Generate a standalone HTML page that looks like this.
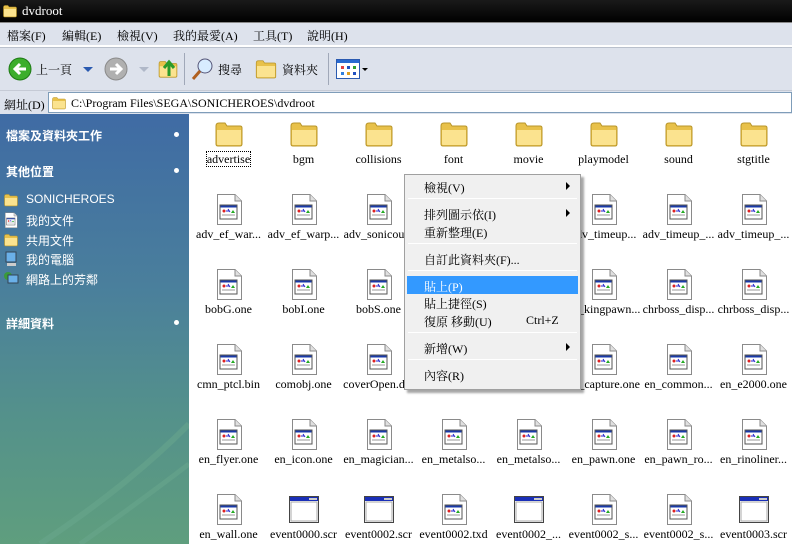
<!DOCTYPE html>
<html><head><meta charset="utf-8"><style>
*{margin:0;padding:0;box-sizing:border-box}
body{width:792px;height:544px;overflow:hidden;background:#fff;position:relative;font-family:"Liberation Serif","Noto Serif CJK SC",serif;font-size:12px;color:#000}
.abs{position:absolute}
#title{left:0;top:0;width:792px;height:22px;background:linear-gradient(#1a1a1a,#000);color:#fff;font-size:13px;line-height:22px;padding-left:22px}
#menubar{left:0;top:22px;width:792px;height:24px;background:#dde2ec;border-top:1px solid #888;border-bottom:1px solid #fff}
#menubar span{position:absolute;top:4px;font-size:12px}
#toolbar{left:0;top:47px;width:792px;height:43px;background:#dde2ec;border-top:1px solid #b9c0cc}
#addr{left:0;top:90px;width:792px;height:24px;background:#dde2ec;border-top:1px solid #c5cad5}
#side{left:0;top:114px;width:189px;height:430px;background:linear-gradient(#3f6ba4 0%,#4a7f9c 40%,#54918b 70%,#5f9e7e 100%);overflow:hidden}
#side .h{position:absolute;left:6px;color:#fff;font-family:"Liberation Sans","Noto Sans CJK SC",sans-serif;font-size:12px;font-weight:bold}
#side .dot{position:absolute;left:174px;width:5px;height:5px;border-radius:50%;background:#fff}
#side .i{position:absolute;left:26px;color:#fff;font-family:"Liberation Sans","Noto Sans CJK SC",sans-serif;font-size:12px}
.c{position:absolute;width:75px;text-align:center}
.c svg{display:block;margin:0 auto}
.c .l{position:absolute;left:-6px;width:87px;top:34px;white-space:nowrap;font-size:12px;line-height:14px}
#menu{left:404px;top:174px;width:177px;height:216px;background:#f0f0f0;border:1px solid #a0a0a0;box-shadow:3px 3px 2px rgba(0,0,0,.35);font-size:12px}
#menu .m{position:absolute;left:19px}
#menu .sep{position:absolute;left:3px;width:169px;height:1px;background:#a0a0a0;border-bottom:1px solid #fff}
#menu .ar{position:absolute;left:161px;width:0;height:0;border-left:4px solid #000;border-top:4px solid transparent;border-bottom:4px solid transparent}
</style></head><body>
<svg width="0" height="0" style="position:absolute"><defs>
<symbol id="fold" viewBox="0 0 32 32"><path d="M3 8 Q3 5 6 5 H12 L14 8 H27 Q29 8 29 10 V26 Q29 28 27 28 H5 Q3 28 3 26 Z" fill="#e8c14a" stroke="#b8952a"/><path d="M4 12 H28 V26 Q28 27 27 27 H5 Q4 27 4 26 Z" fill="#fbe38f"/></symbol>
<symbol id="doc" viewBox="0 0 32 32"><path d="M4.5 1.5 H22 L28.5 8 V31.5 H4.5 Z" fill="#fff" stroke="#8a8a8a"/><path d="M22 1.5 V8 H28.5" fill="#e0e0e0" stroke="#8a8a8a"/><rect x="7" y="12" width="17" height="14" fill="#fff" stroke="#555"/><rect x="7.5" y="12.5" width="16" height="2" fill="#1a3aa8"/><circle cx="11" cy="18" r="1.5" fill="#d22"/><path d="M13 18 h3 M15 16 l2 3" stroke="#22c" /><path d="M18 20 l2 -3 l2 3z" fill="#2a2"/><path d="M9 22 h13" stroke="#999"/></symbol>
<symbol id="win" viewBox="0 0 32 32"><rect x="1.5" y="3.5" width="29" height="26" fill="#fff" stroke="#444"/><rect x="2" y="4" width="28" height="4" fill="#1a2fb8"/><rect x="3" y="9" width="26" height="19" fill="#fff" stroke="#aaa"/><rect x="21" y="5" width="8" height="2" fill="#ccc"/></symbol>
</defs></svg>

<div id="title" class="abs"><svg class="abs" style="left:2px;top:3px" width="16" height="16"><use href="#fold"/></svg>dvdroot</div>
<div id="menubar" class="abs"><span style="left:7px">檔案(F)</span><span style="left:62px">編輯(E)</span><span style="left:117px">檢視(V)</span><span style="left:173px">我的最愛(A)</span><span style="left:253px">工具(T)</span><span style="left:307px">說明(H)</span></div>
<div id="toolbar" class="abs">
<svg class="abs" style="left:8px;top:9px" width="24" height="24"><circle cx="12" cy="12" r="11" fill="#3cae2c" stroke="#1d7a14"/><path d="M18 12 H8 M12 7 L7 12 L12 17" stroke="#fff" stroke-width="3" fill="none"/></svg>
<span class="abs" style="left:36px;top:13px">上一頁</span>
<div class="abs" style="left:83px;top:19px;border-top:5px solid #2a5ab0;border-left:5px solid transparent;border-right:5px solid transparent"></div>
<svg class="abs" style="left:104px;top:9px" width="24" height="24"><circle cx="12" cy="12" r="11" fill="#b0b0b0" stroke="#8a8a8a"/><path d="M6 12 H16 M12 7 L17 12 L12 17" stroke="#fff" stroke-width="3" fill="none"/></svg>
<div class="abs" style="left:139px;top:19px;border-top:5px solid #b0b8c8;border-left:5px solid transparent;border-right:5px solid transparent"></div>
<svg class="abs" style="left:157px;top:8px" width="22" height="26"><use href="#fold"/><path d="M12 20 V8 M7 12 L12 6 L17 12" stroke="#2a9a2a" stroke-width="3" fill="none"/></svg>
<div class="abs" style="left:184px;top:5px;width:1px;height:32px;background:#a0a8b8"></div>
<svg class="abs" style="left:190px;top:8px" width="26" height="26"><circle cx="15" cy="10" r="7" fill="#d8ecff" stroke="#557"/><path d="M10 15 L3 23" stroke="#b06020" stroke-width="3"/></svg>
<span class="abs" style="left:218px;top:13px">搜尋</span>
<svg class="abs" style="left:254px;top:9px" width="24" height="24"><use href="#fold"/></svg>
<span class="abs" style="left:282px;top:13px">資料夾</span>
<div class="abs" style="left:328px;top:5px;width:1px;height:32px;background:#a0a8b8"></div>
<svg class="abs" style="left:336px;top:11px" width="24" height="20"><rect x="0.5" y="0.5" width="23" height="19" fill="#fff" stroke="#2a5ab0"/><rect x="1" y="1" width="22" height="3" fill="#2a6ad0"/><rect x="5" y="7" width="3" height="3" fill="#e04040"/><rect x="11" y="7" width="3" height="3" fill="#2050c0"/><rect x="17" y="7" width="3" height="3" fill="#30a030"/><rect x="5" y="13" width="3" height="3" fill="#3080e0"/><rect x="11" y="13" width="3" height="3" fill="#e0a020"/><rect x="17" y="13" width="3" height="3" fill="#2050c0"/></svg>
<div class="abs" style="left:362px;top:20px;border-top:3px solid #000;border-left:3px solid transparent;border-right:3px solid transparent"></div>
</div>
<div id="addr" class="abs"><span class="abs" style="left:4px;top:5px">網址(D)</span>
<div class="abs" style="left:48px;top:1px;width:744px;height:21px;background:#fff;border:1px solid #7f9db9"></div>
<svg class="abs" style="left:51px;top:4px" width="16" height="16"><use href="#fold"/></svg>
<span class="abs" style="left:71px;top:5px">C:\Program Files\SEGA\SONICHEROES\dvdroot</span></div>

<div id="side" class="abs">
<svg class="abs" style="left:0;top:200px" width="189" height="230"><path d="M40 230 Q130 170 189 110" stroke="#6aa88e" stroke-width="6" fill="none" opacity=".5"/><path d="M80 230 Q150 180 189 150" stroke="#6aa88e" stroke-width="5" fill="none" opacity=".5"/></svg>
<div class="h" style="top:13px">檔案及資料夾工作</div><div class="dot" style="top:18px"></div>
<div class="h" style="top:49px">其他位置</div><div class="dot" style="top:54px"></div>
<svg class="abs" style="left:3px;top:78px" width="16" height="16"><use href="#fold"/></svg><div class="i" style="top:78px">SONICHEROES</div>
<svg class="abs" style="left:3px;top:98px" width="16" height="16"><use href="#doc"/></svg><div class="i" style="top:98px">我的文件</div>
<svg class="abs" style="left:3px;top:118px" width="16" height="16"><use href="#fold"/></svg><div class="i" style="top:118px">共用文件</div>
<svg class="abs" style="left:3px;top:137px" width="16" height="16"><rect x="3" y="1" width="10" height="10" fill="#6ab0e8" stroke="#345"/><rect x="4" y="12" width="9" height="3" fill="#ccc"/></svg><div class="i" style="top:137px">我的電腦</div>
<svg class="abs" style="left:3px;top:157px" width="16" height="16"><circle cx="5" cy="5" r="4" fill="#3a9a3a"/><rect x="5" y="4" width="10" height="8" fill="#6ab0e8" stroke="#345"/></svg><div class="i" style="top:157px">網路上的芳鄰</div>
<div class="h" style="top:201px">詳細資料</div><div class="dot" style="top:206px"></div>
</div>

<!-- row 1 -->
<div class="c" style="left:191px;top:118px"><svg width="32" height="32"><use href="#fold"/></svg><div class="l"><span style="outline:1px dotted #000">advertise</span></div></div>
<div class="c" style="left:266px;top:118px"><svg width="32" height="32"><use href="#fold"/></svg><div class="l">bgm</div></div>
<div class="c" style="left:341px;top:118px"><svg width="32" height="32"><use href="#fold"/></svg><div class="l">collisions</div></div>
<div class="c" style="left:416px;top:118px"><svg width="32" height="32"><use href="#fold"/></svg><div class="l">font</div></div>
<div class="c" style="left:491px;top:118px"><svg width="32" height="32"><use href="#fold"/></svg><div class="l">movie</div></div>
<div class="c" style="left:566px;top:118px"><svg width="32" height="32"><use href="#fold"/></svg><div class="l">playmodel</div></div>
<div class="c" style="left:641px;top:118px"><svg width="32" height="32"><use href="#fold"/></svg><div class="l">sound</div></div>
<div class="c" style="left:716px;top:118px"><svg width="32" height="32"><use href="#fold"/></svg><div class="l">stgtitle</div></div>
<!-- row 2 -->
<div class="c" style="left:191px;top:193px"><svg width="32" height="32"><use href="#doc"/></svg><div class="l">adv_ef_war...</div></div>
<div class="c" style="left:266px;top:193px"><svg width="32" height="32"><use href="#doc"/></svg><div class="l">adv_ef_warp...</div></div>
<div class="c" style="left:341px;top:193px"><svg width="32" height="32"><use href="#doc"/></svg><div class="l">adv_sonicou...</div></div>
<div class="c" style="left:566px;top:193px"><svg width="32" height="32"><use href="#doc"/></svg><div class="l">adv_timeup...</div></div>
<div class="c" style="left:641px;top:193px"><svg width="32" height="32"><use href="#doc"/></svg><div class="l">adv_timeup_...</div></div>
<div class="c" style="left:716px;top:193px"><svg width="32" height="32"><use href="#doc"/></svg><div class="l">adv_timeup_...</div></div>
<!-- row 3 -->
<div class="c" style="left:191px;top:268px"><svg width="32" height="32"><use href="#doc"/></svg><div class="l">bobG.one</div></div>
<div class="c" style="left:266px;top:268px"><svg width="32" height="32"><use href="#doc"/></svg><div class="l">bobI.one</div></div>
<div class="c" style="left:341px;top:268px"><svg width="32" height="32"><use href="#doc"/></svg><div class="l">bobS.one</div></div>
<div class="c" style="left:566px;top:268px"><svg width="32" height="32"><use href="#doc"/></svg><div class="l">en_kingpawn...</div></div>
<div class="c" style="left:641px;top:268px"><svg width="32" height="32"><use href="#doc"/></svg><div class="l">chrboss_disp...</div></div>
<div class="c" style="left:716px;top:268px"><svg width="32" height="32"><use href="#doc"/></svg><div class="l">chrboss_disp...</div></div>
<!-- row 4 -->
<div class="c" style="left:191px;top:343px"><svg width="32" height="32"><use href="#doc"/></svg><div class="l">cmn_ptcl.bin</div></div>
<div class="c" style="left:266px;top:343px"><svg width="32" height="32"><use href="#doc"/></svg><div class="l">comobj.one</div></div>
<div class="c" style="left:341px;top:343px"><svg width="32" height="32"><use href="#doc"/></svg><div class="l">coverOpen.d...</div></div>
<div class="c" style="left:416px;top:343px"><svg width="32" height="32"><use href="#doc"/></svg><div class="l">ef_bomb.dam</div></div>
<div class="c" style="left:491px;top:343px"><svg width="32" height="32"><use href="#doc"/></svg><div class="l">ef_bomb.bin</div></div>
<div class="c" style="left:566px;top:343px"><svg width="32" height="32"><use href="#doc"/></svg><div class="l">en_capture.one</div></div>
<div class="c" style="left:641px;top:343px"><svg width="32" height="32"><use href="#doc"/></svg><div class="l">en_common...</div></div>
<div class="c" style="left:716px;top:343px"><svg width="32" height="32"><use href="#doc"/></svg><div class="l">en_e2000.one</div></div>
<!-- row 5 -->
<div class="c" style="left:191px;top:418px"><svg width="32" height="32"><use href="#doc"/></svg><div class="l">en_flyer.one</div></div>
<div class="c" style="left:266px;top:418px"><svg width="32" height="32"><use href="#doc"/></svg><div class="l">en_icon.one</div></div>
<div class="c" style="left:341px;top:418px"><svg width="32" height="32"><use href="#doc"/></svg><div class="l">en_magician...</div></div>
<div class="c" style="left:416px;top:418px"><svg width="32" height="32"><use href="#doc"/></svg><div class="l">en_metalso...</div></div>
<div class="c" style="left:491px;top:418px"><svg width="32" height="32"><use href="#doc"/></svg><div class="l">en_metalso...</div></div>
<div class="c" style="left:566px;top:418px"><svg width="32" height="32"><use href="#doc"/></svg><div class="l">en_pawn.one</div></div>
<div class="c" style="left:641px;top:418px"><svg width="32" height="32"><use href="#doc"/></svg><div class="l">en_pawn_ro...</div></div>
<div class="c" style="left:716px;top:418px"><svg width="32" height="32"><use href="#doc"/></svg><div class="l">en_rinoliner...</div></div>
<!-- row 6 -->
<div class="c" style="left:191px;top:493px"><svg width="32" height="32"><use href="#doc"/></svg><div class="l">en_wall.one</div></div>
<div class="c" style="left:266px;top:493px"><svg width="32" height="32"><use href="#win"/></svg><div class="l">event0000.scr</div></div>
<div class="c" style="left:341px;top:493px"><svg width="32" height="32"><use href="#win"/></svg><div class="l">event0002.scr</div></div>
<div class="c" style="left:416px;top:493px"><svg width="32" height="32"><use href="#doc"/></svg><div class="l">event0002.txd</div></div>
<div class="c" style="left:491px;top:493px"><svg width="32" height="32"><use href="#win"/></svg><div class="l">event0002_...</div></div>
<div class="c" style="left:566px;top:493px"><svg width="32" height="32"><use href="#doc"/></svg><div class="l">event0002_s...</div></div>
<div class="c" style="left:641px;top:493px"><svg width="32" height="32"><use href="#doc"/></svg><div class="l">event0002_s...</div></div>
<div class="c" style="left:716px;top:493px"><svg width="32" height="32"><use href="#win"/></svg><div class="l">event0003.scr</div></div>

<div id="menu" class="abs">
<div class="m" style="top:4px">檢視(V)</div><div class="ar" style="top:7px"></div>
<div class="sep" style="top:23px"></div>
<div class="m" style="top:31px">排列圖示依(I)</div><div class="ar" style="top:34px"></div>
<div class="m" style="top:49px">重新整理(E)</div>
<div class="sep" style="top:68px"></div>
<div class="m" style="top:76px">自訂此資料夾(F)...</div>
<div class="sep" style="top:95px"></div>
<div class="abs" style="left:2px;top:101px;width:171px;height:18px;background:#3399ff"></div>
<div class="m" style="top:103px;color:#fff">貼上(P)</div>
<div class="m" style="top:120px">貼上捷徑(S)</div>
<div class="m" style="top:138px">復原 移動(U)</div><div class="abs" style="left:121px;top:138px">Ctrl+Z</div>
<div class="sep" style="top:157px"></div>
<div class="m" style="top:165px">新增(W)</div><div class="ar" style="top:168px"></div>
<div class="sep" style="top:184px"></div>
<div class="m" style="top:192px">內容(R)</div>
</div>
</body></html>
